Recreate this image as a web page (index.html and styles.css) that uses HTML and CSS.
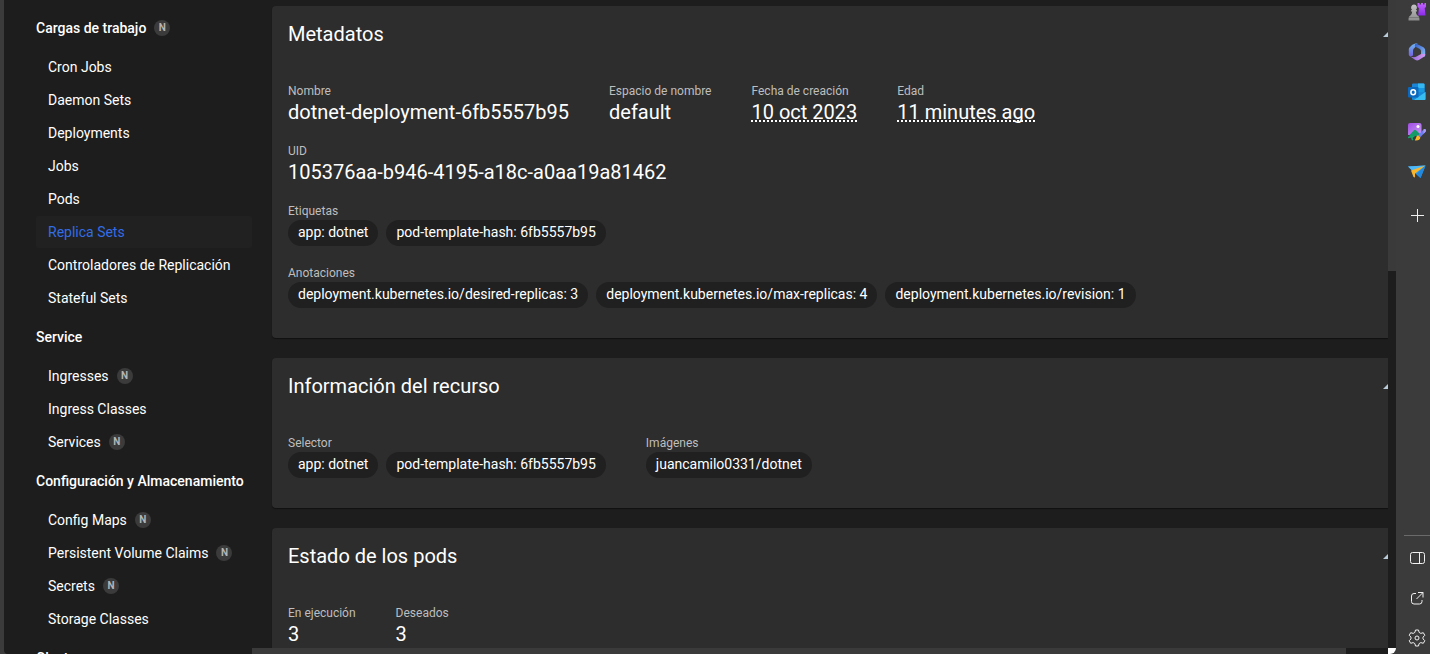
FILE: index.html
```html
<!DOCTYPE html>
<html lang="es">
<head>
<meta charset="utf-8">
<title>Replica Sets - Kubernetes Dashboard</title>
<link rel="stylesheet" href="styles.css">
</head>
<body>
<div class="window">
  <nav class="nav">
    <section>
      <h2 class="nav-title">Cargas de trabajo <span class="badge">N</span></h2>
      <a class="nav-item" href="#">Cron Jobs</a>
      <a class="nav-item" href="#">Daemon Sets</a>
      <a class="nav-item" href="#">Deployments</a>
      <a class="nav-item" href="#">Jobs</a>
      <a class="nav-item" href="#">Pods</a>
      <a class="nav-item active" href="#">Replica Sets</a>
      <a class="nav-item" href="#">Controladores de Replicación</a>
      <a class="nav-item" href="#">Stateful Sets</a>
    </section>
    <section>
      <h2 class="nav-title">Service</h2>
      <a class="nav-item" href="#">Ingresses <span class="badge">N</span></a>
      <a class="nav-item" href="#">Ingress Classes</a>
      <a class="nav-item" href="#">Services <span class="badge">N</span></a>
    </section>
    <section>
      <h2 class="nav-title">Configuración y Almacenamiento</h2>
      <a class="nav-item" href="#">Config Maps <span class="badge">N</span></a>
      <a class="nav-item" href="#">Persistent Volume Claims <span class="badge">N</span></a>
      <a class="nav-item" href="#">Secrets <span class="badge">N</span></a>
      <a class="nav-item" href="#">Storage Classes</a>
    </section>
    <section>
      <h2 class="nav-title">Cluster</h2>
    </section>
  </nav>

  <div class="view">
    <main class="content">
      <section class="card">
        <header class="card-head">
          <h1>Metadatos</h1>
          <button class="toggle" aria-label="Contraer"><svg viewBox="0 0 5 5"><path d="M5 0V5H0z"/></svg></button>
        </header>
        <div class="row">
          <div class="prop"><div class="label">Nombre</div><div class="value">dotnet-deployment-6fb5557b95</div></div>
          <div class="prop"><div class="label">Espacio de nombre</div><div class="value">default</div></div>
          <div class="prop"><div class="label">Fecha de creación</div><div class="value"><span class="dotted">10 oct 2023</span></div></div>
          <div class="prop"><div class="label">Edad</div><div class="value"><span class="dotted">11 minutes ago</span></div></div>
        </div>
        <div class="row">
          <div class="prop"><div class="label">UID</div><div class="value">105376aa-b946-4195-a18c-a0aa19a81462</div></div>
        </div>
        <div class="row">
          <div class="prop"><div class="label">Etiquetas</div>
            <div class="chips"><span class="chip">app: dotnet</span><span class="chip">pod-template-hash: 6fb5557b95</span></div></div>
        </div>
        <div class="row">
          <div class="prop"><div class="label">Anotaciones</div>
            <div class="chips"><span class="chip">deployment.kubernetes.io/desired-replicas: 3</span><span class="chip">deployment.kubernetes.io/max-replicas: 4</span><span class="chip">deployment.kubernetes.io/revision: 1</span></div></div>
        </div>
      </section>

      <section class="card">
        <header class="card-head">
          <h1>Información del recurso</h1>
          <button class="toggle" aria-label="Contraer"><svg viewBox="0 0 5 5"><path d="M5 0V5H0z"/></svg></button>
        </header>
        <div class="row">
          <div class="prop"><div class="label">Selector</div>
            <div class="chips"><span class="chip">app: dotnet</span><span class="chip">pod-template-hash: 6fb5557b95</span></div></div>
          <div class="prop"><div class="label">Imágenes</div>
            <div class="chips"><span class="chip">juancamilo0331/dotnet</span></div></div>
        </div>
      </section>

      <section class="card">
        <header class="card-head">
          <h1>Estado de los pods</h1>
          <button class="toggle" aria-label="Contraer"><svg viewBox="0 0 5 5"><path d="M5 0V5H0z"/></svg></button>
        </header>
        <div class="row">
          <div class="prop"><div class="label">En ejecución</div><div class="value">3</div></div>
          <div class="prop"><div class="label">Deseados</div><div class="value">3</div></div>
        </div>
      </section>
    </main>
    <div class="hscroll"><div class="hthumb"></div></div>
  </div>

  <div class="vscroll"><div class="vthumb"></div><div class="track"></div><div class="corner"></div></div>

  <aside class="tools">
    <div class="tool-group">
      <button aria-label="Juegos"><svg viewBox="0 0 18 18">
        <defs><linearGradient id="rook" x1="0" y1="0" x2="0" y2="1"><stop offset="0" stop-color="#c565ff"/><stop offset="1" stop-color="#8a2be8"/></linearGradient>
        <linearGradient id="pawn" x1="0" y1="0" x2="0" y2="1"><stop offset="0" stop-color="#c4c4c4"/><stop offset="1" stop-color="#8c8c8c"/></linearGradient></defs>
        <path d="M9.500 0h2v1.500h1.500V0h2v1.500h1.500V0h1.500v4l-1.300 1 .8 7.500H10.200L10.900 5 9.500 4z" fill="url(#rook)"/>
        <path d="M6 1.500a3 3 0 0 1 2 5.200l1 .8v1H7.800c.1 2 1 3.500 2.400 4.500.9.700 1.300 1.500 1.300 4.500H.5c0-3 .4-3.800 1.300-4.500C3.200 12 4.100 10.500 4.200 8.500H3v-1l1-.8a3 3 0 0 1 2-5.200z" fill="url(#pawn)"/>
        <path d="M1 14.500h10" stroke="#7a7a7a"/></svg></button>
      <button aria-label="Microsoft 365"><svg viewBox="0 0 18 18">
        <defs><linearGradient id="ma" x1="0" y1="0" x2="1" y2="1"><stop offset="0" stop-color="#3159c9"/><stop offset="1" stop-color="#8fc4f7"/></linearGradient>
        <linearGradient id="mb" x1="0" y1="0" x2="0" y2="1"><stop offset="0" stop-color="#6db5f2"/><stop offset="1" stop-color="#7463df"/></linearGradient>
        <linearGradient id="mc" x1="0" y1="0" x2="1" y2="0"><stop offset="0" stop-color="#8a63d8"/><stop offset="1" stop-color="#d69af0"/></linearGradient></defs>
        <path d="M9.500.5C7 .3 5.500 1 4 2L2.500 3.500C1.300 4.500.8 5.300.8 6.500v5C.8 13.500 3 13.500 5 12.500V8c0-1.500.5-2.300 1.500-3z" fill="url(#mb)"/>
        <path d="M8 .5l6.500 3.300c2 1 2.700 2 2.700 4.200v4c0 1-.5 1.500-1.200 2L13 12V8.500c0-1.300-.4-2-1.500-2.700L7 3.500C6.500 2.500 7 1 8 .5z" fill="url(#ma)"/>
        <path d="M1 12c.5 1 1.200 1.500 2 2l4 2.700c1.500 1 2.800 1 4.200.1l4-2.600c1.500-1 2-1.800 2-3.200L13 11l-4 2.300c-2.500 1.500-6 1.200-8-1.300z" fill="url(#mc)"/></svg></button>
      <button aria-label="Outlook"><svg viewBox="0 0 18 18">
        <path d="M4 1.500A1.200 1.200 0 0 1 5.200.5h10.300a1 1 0 0 1 1 1V10H4z" fill="#1b86d8"/>
        <path d="M10 .5h5.500a1 1 0 0 1 1 1V5H10z" fill="#35b7f1"/><path d="M10 5h6.500v4H10z" fill="#1799e2"/>
        <path d="M4 9h13.500v7a1 1 0 0 1-1 1H5a1 1 0 0 1-1-1z" fill="#1688d6"/>
        <path d="M17.500 9v7a1 1 0 0 1-1 1H6z" fill="#38bdf3"/>
        <rect x="0" y="4" width="10.500" height="10.500" rx="1" fill="#0b68bd"/>
        <ellipse cx="5.200" cy="9.200" rx="2.300" ry="2.500" fill="none" stroke="#fff" stroke-width="1.500"/></svg></button>
      <button aria-label="Image Creator"><svg viewBox="0 0 18 18">
        <defs><linearGradient id="im" x1="0" y1="0" x2="1" y2="1"><stop offset="0" stop-color="#a04ce2"/><stop offset="1" stop-color="#c79af5"/></linearGradient></defs>
        <path d="M2 0h9.500A2 2 0 0 1 13.500 2v10H0V2a2 2 0 0 1 2-2z" fill="url(#im)"/><circle cx="10" cy="3.500" r="1.500" fill="#fff"/>
        <path d="M1.500 12L6 7.300q1-1 2 0L12 11l-2 2H1.500z" fill="#159a68"/>
        <path d="M0 14.500q3-1 5-.8-2 1.500 0 3.300" fill="none" stroke="#18a46c" stroke-width="1.600"/>
        <path d="M10 12.500l5.500-6q1.300-1 2.200 0 .7.900 0 2l-5.700 6z" fill="#6d7df0"/><path d="M15.500 6.500q1.300-1 2.200 0 .7.900 0 2L15.500 11z" fill="#a99af8"/>
        <path d="M10 12.200l2.300 2.300c0 2-1.800 3.200-5 3-.8-.2-.2-.8.300-1.500.6-1.400.8-3.500 2.400-3.800z" fill="#f9b928"/></svg></button>
      <button aria-label="Drop"><svg viewBox="0 0 18 18">
        <path d="M0 3.500L17.500 2.500 12.500 15 8.500 11.500z" fill="#359ff0"/>
        <path d="M0 3.500L17.500 2.500 4.500 8z" fill="#4eb9f7"/><path d="M3 7.500L17.500 2.500 7 10.500v4L5.500 14z" fill="#f9b52b"/><path d="M17.500 2.500L8.500 10.800 12.500 15z" fill="#2188dd"/></svg></button>
      <button class="add" aria-label="Agregar"><svg viewBox="0 0 18 18" class="line"><path d="M9.500 3v13M3 9.500h13"/></svg></button>
    </div>
    <div class="tool-group bottom">
      <button aria-label="Panel lateral"><svg viewBox="0 0 18 18" class="line"><rect x="2.500" y="3.500" width="14" height="11" rx="2"/><path d="M11.500 3.500v11"/></svg></button>
      <button aria-label="Abrir vínculo"><svg viewBox="0 0 18 18" class="line"><path d="M8 4.500H6A2.500 2.500 0 0 0 3.500 7v5.500A2.500 2.500 0 0 0 6 15h5.500a2.500 2.500 0 0 0 2.500-2.500V11M10 3.500h5v5M15 3.500L8.500 10"/></svg></button>
      <button aria-label="Configuración"><svg viewBox="0 0 18 18" class="line"><path d="M7.500 1h3l.6 2.400 1.700 1 2.500-.7 1.500 2.600L15 8.100v1.800l1.800 1.800-1.500 2.600-2.500-.7-1.700 1-.6 2.400h-3l-.6-2.400-1.700-1-2.500.7-1.500-2.600L3 9.900V8.100L1.200 6.300l1.500-2.600 2.500.7 1.700-1z" stroke-linejoin="round"/><circle cx="9" cy="9" r="2"/></svg></button>
    </div>
  </aside>
</div>
</body>
</html>
```
FILE: styles.css
```css
* { box-sizing: border-box; }

body {
  margin: 0;
  background: #3b3b3b;
  color: #fff;
  font: 400 14px/24px Roboto, sans-serif;
}

button {
  padding: 0;
  border: 0;
  background: none;
}

h1, h2 { margin: 0; }

.window {
  display: flex;
  height: 100vh;
  overflow: hidden;
  padding-left: 4px;
}

/* Navigation */
.nav {
  flex: 0 0 248px;
  overflow: hidden;
  padding: 5px 0 0 32px;
  background: #1d1d1d;
  border-bottom-left-radius: 4px;
}

.nav-title {
  display: flex;
  align-items: center;
  gap: 8px;
  height: 45px;
  font-size: 14px;
  font-weight: 500;
  white-space: nowrap;
}

.nav-item {
  display: flex;
  align-items: center;
  gap: 8px;
  height: 32px;
  margin-top: 1px;
  padding-left: 12px;
  border-radius: 2px;
  color: #fff;
  text-decoration: none;
  white-space: nowrap;
}

.nav-item.active {
  background: #212121;
  color: #326de6;
}

.badge {
  width: 16px;
  height: 16px;
  border-radius: 50%;
  background: #3b3b3b;
  color: #b5b5b5;
  font-size: 10px;
  font-weight: 700;
  line-height: 16px;
  text-align: center;
}

/* Resource details */
.view {
  display: flex;
  flex: 1;
  flex-direction: column;
  min-width: 0;
  background: #1d1d1d;
}

.content {
  display: flex;
  flex: 1;
  flex-direction: column;
  gap: 20px;
  min-height: 0;
  overflow: hidden;
  padding: 6px 0 0 20px;
}

.card {
  flex: none;
  padding: 0 0 30px 16px;
  border-radius: 4px 0 0 4px;
  background: #2d2d2d;
  box-shadow: 0 1px 1px #111;
}

.card-head {
  display: flex;
  align-items: center;
  justify-content: space-between;
  height: 56px;
  margin-bottom: 20px;
}

.card-head h1 {
  font-size: 20px;
  font-weight: 400;
}

.toggle svg {
  display: block;
  width: 5px;
  height: 5px;
  fill: #b9cad8;
}

.row {
  display: flex;
  gap: 40px;
}

.row + .row { margin-top: 18px; }

.label {
  color: #bebebe;
  font-size: 12px;
  line-height: 18px;
}

.value {
  font-size: 20px;
  line-height: 24px;
}

.dotted {
  text-decoration: underline dotted 2px;
  text-decoration-skip-ink: none;
}

.chips {
  display: flex;
  gap: 8px;
}

.chip {
  height: 26px;
  padding: 0 10px;
  border-radius: 13px;
  background: #202020;
  line-height: 24px;
}

/* Scrollbars */
.hscroll {
  flex: 0 0 6px;
  padding-right: 42px;
  background: #1d1d1d;
}

.hthumb {
  height: 100%;
  background: #3a3a3a;
}

.vscroll {
  display: flex;
  flex: 0 0 8px;
  flex-direction: column;
}

.vthumb {
  flex: 0 0 271px;
  background: #3a3a3a;
}

.track {
  flex: 1;
  background: #1d1d1d;
}

.corner {
  height: 6px;
  background: #fff;
  border-bottom-right-radius: 6px;
}

/* Browser tool strip */
.tools {
  display: flex;
  flex: 0 0 34px;
  flex-direction: column;
  justify-content: space-between;
  padding-left: 8px;
  background: #3b3b3b;
}

.tool-group {
  display: flex;
  flex-direction: column;
  margin-top: -8px;
}

.tool-group button {
  display: flex;
  align-items: center;
  height: 40px;
}

.tool-group svg {
  display: block;
  width: 18px;
  height: 18px;
  margin-left: 4px;
}

.tool-group .add { height: 46px; }

.bottom {
  margin: 0 0 -4px;
  padding-top: 2px;
  border-top: 1px solid #6a6a6a;
}

.line {
  fill: none;
  stroke: #f0f0f0;
}
```
